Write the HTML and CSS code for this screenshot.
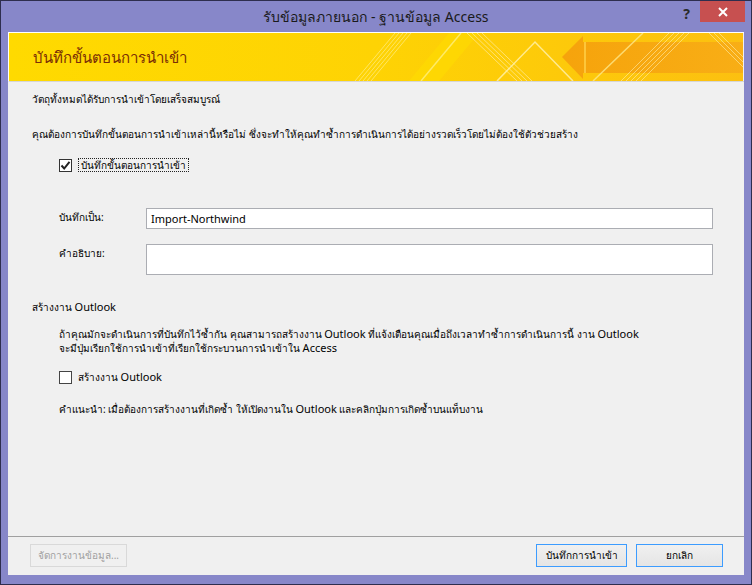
FILE: index.html
```html
<!DOCTYPE html>
<html lang="th">
<head>
  <meta charset="UTF-8" />
  <title>รับข้อมูลภายนอก - ฐานข้อมูล Access</title>
  <link rel="stylesheet" href="styles.css">
</head>
<body>
  <div class="window">
    <div class="titlebar">
      <span class="title">รับข้อมูลภายนอก - ฐานข้อมูล Access</span>
      <span class="help">?</span>
      <span class="close">
        <svg width="12" height="12" viewBox="0 0 12 12"><path d="M2 2 L10 10 M10 2 L2 10" stroke="#fff" stroke-width="2"/></svg>
      </span>
    </div>

    <div class="client">
      <div class="banner">
        <!-- decorative wizard header art -->
        <svg class="banner-art" width="734" height="48" viewBox="0 0 734 48" preserveAspectRatio="none">
          <defs>
            <linearGradient id="bg" x1="0" y1="0" x2="1" y2="0">
              <stop offset="0" stop-color="#ffda00"/>
              <stop offset="0.5" stop-color="#fed304"/>
              <stop offset="1" stop-color="#fcc010"/>
            </linearGradient>
            <linearGradient id="shaft" x1="0" y1="0" x2="1" y2="0">
              <stop offset="0" stop-color="#f59f0c"/>
              <stop offset="1" stop-color="#f8ac16"/>
            </linearGradient>
          </defs>
          <rect width="734" height="48" fill="url(#bg)"/>
          <polygon points="400,48 440,0 470,0 430,48" fill="#ffe000" opacity="0.45"/>
          <g stroke="#fff6b0" stroke-width="1" opacity="0.55">
            <line x1="346" y1="48" x2="386" y2="0"/>
            <line x1="350" y1="48" x2="390" y2="0"/>
            <line x1="354" y1="48" x2="394" y2="0"/>
            <line x1="358" y1="48" x2="398" y2="0"/>
            <line x1="362" y1="48" x2="402" y2="0"/>
          </g>
          <line x1="412" y1="48" x2="452" y2="0" stroke="#fff080" stroke-width="1.5" opacity="0.8"/>
          <g stroke="#fff2b8" stroke-width="1" opacity="0.6">
            <line x1="458" y1="0" x2="508" y2="48"/>
            <line x1="463" y1="0" x2="513" y2="48"/>
            <line x1="468" y1="0" x2="518" y2="48"/>
            <line x1="473" y1="0" x2="523" y2="48"/>
          </g>
          <polyline points="488,48 526,9 564,48" fill="none" stroke="#fff3b0" stroke-width="1.5" opacity="0.8"/>
          <polygon points="553,24 574,3 574,9 734,9 734,40 574,40 574,46" fill="url(#shaft)" opacity="0.9"/>
          <line x1="576" y1="9" x2="576" y2="40" stroke="#ffd24a" stroke-width="1.5"/>
          <line x1="584" y1="48" x2="634" y2="0" stroke="#ffe98a" stroke-width="1.5" opacity="0.8"/>
          <g stroke="#fff2b8" stroke-width="1" opacity="0.55">
            <line x1="612" y1="48" x2="660" y2="0"/>
            <line x1="617" y1="48" x2="665" y2="0"/>
            <line x1="622" y1="48" x2="670" y2="0"/>
            <line x1="627" y1="48" x2="675" y2="0"/>
            <line x1="632" y1="48" x2="680" y2="0"/>
          </g>
          <g stroke="#fff2b8" stroke-width="1" opacity="0.55">
            <line x1="700" y1="0" x2="734" y2="34"/>
            <line x1="705" y1="0" x2="734" y2="29"/>
            <line x1="710" y1="0" x2="734" y2="24"/>
          </g>
        </svg>
        <h1>บันทึกขั้นตอนการนำเข้า</h1>
      </div>

      <div class="body">
        <p class="line first">วัตถุทั้งหมดได้รับการนำเข้าโดยเสร็จสมบูรณ์</p>
        <p class="line">คุณต้องการบันทึกขั้นตอนการนำเข้าเหล่านี้หรือไม่ ซึ่งจะทำให้คุณทำซ้ำการดำเนินการได้อย่างรวดเร็วโดยไม่ต้องใช้ตัวช่วยสร้าง</p>

        <label class="check indent">
          <span class="box checked">
            <svg width="11" height="11" viewBox="0 0 11 11"><path d="M1.5 5.5 L4.2 8.5 L9.5 1.8" fill="none" stroke="#222" stroke-width="2"/></svg>
          </span>
          <span class="focus">บันทึกขั้นตอนการนำเข้า</span>
        </label>

        <div class="fields indent">
          <div class="field">
            <span class="field-label">บันทึกเป็น:</span>
            <div class="input en">Import-Northwind</div>
          </div>
          <div class="field">
            <span class="field-label">คำอธิบาย:</span>
            <div class="input tall"></div>
          </div>
        </div>

        <p class="line section">สร้างงาน <span class="en">Outlook</span></p>
        <p class="para indent">ถ้าคุณมักจะดำเนินการที่บันทึกไว้ซ้ำกัน คุณสามารถสร้างงาน <span class="en">Outlook</span> ที่แจ้งเตือนคุณเมื่อถึงเวลาทำซ้ำการดำเนินการนี้ งาน <span class="en">Outlook</span><br>จะมีปุ่มเรียกใช้การนำเข้าที่เรียกใช้กระบวนการนำเข้าใน <span class="en">Access</span></p>

        <label class="check indent outlook">
          <span class="box"></span>
          <span>สร้างงาน <span class="en">Outlook</span></span>
        </label>

        <p class="line indent tip">คำแนะนำ: เมื่อต้องการสร้างงานที่เกิดซ้ำ ให้เปิดงานใน <span class="en">Outlook</span> และคลิกปุ่มการเกิดซ้ำบนแท็บงาน</p>
      </div>

      <div class="footer">
        <button class="btn disabled" disabled>จัดการงานข้อมูล...</button>
        <div class="spacer"></div>
        <button class="btn primary save">บันทึกการนำเข้า</button>
        <button class="btn primary cancel">ยกเลิก</button>
      </div>
    </div>
  </div>
</body>
</html>
```

FILE: styles.css
```css
/* Base */
* { box-sizing: border-box; margin: 0; padding: 0; }
body { width: 752px; height: 585px; overflow: hidden; font-family: Tahoma, "Noto Sans", "DejaVu Sans", sans-serif; font-size: 10px; color: #000; background: #fff; }
.en { font-size: 11px; }

/* Window frame */
.window { width: 752px; height: 585px; border: 1px solid #2e2e4e; background: #8787c9; display: flex; flex-direction: column; padding: 0 7px 9px 7px; }

.titlebar { height: 31px; display: flex; align-items: center; justify-content: center; position: relative; }
.title { font-size: 14px; color: #1a1a1a; }
.help { position: absolute; right: 54px; top: 3px; font-size: 14px; font-weight: bold; color: #2a2a2a; }
.close { position: absolute; right: -1px; top: 0; width: 45px; height: 21px; background: #c75050; display: flex; align-items: center; justify-content: center; }

/* Client area */
.client { flex: 1; background: #f0f0f0; display: flex; flex-direction: column; }

.banner { height: 50px; position: relative; border-top: 1px solid #fff; border-left: 1px solid #fff; border-bottom: 1px solid #d6d6d6; overflow: hidden; display: flex; align-items: center; }
.banner-art { position: absolute; left: 0; top: 0; }
.banner h1 { position: relative; font-size: 15px; font-weight: normal; color: #7a2e06; padding-left: 24px; margin-top: 1px; }

.body { flex: 1; padding: 10px 0 0 24px; }
.line { line-height: 14px; }
.body .line + .line { margin-top: 21px; }
.indent { margin-left: 27px; }

.check { display: flex; align-items: center; gap: 6px; height: 14px; }
.body > .check { margin-top: 17px; }
.box { width: 13px; height: 13px; border: 1px solid #333; background: #fff; display: flex; align-items: center; justify-content: center; }
.focus { border: 1px dotted #222; padding: 0 2px; line-height: 12px; }

.fields { margin-top: 36px; margin-right: 31px; display: flex; flex-direction: column; gap: 15px; }
.field { display: flex; align-items: flex-start; }
.field-label { width: 87px; padding-top: 2px; }
.input { flex: 1; height: 21px; border: 1px solid #abadb3; background: #fff; padding: 2px 4px; line-height: 15px; }
.input.tall { height: 31px; }

.body .section { margin-top: 25px; }
.para { margin-top: 13px; line-height: 14px; }
.body > .outlook { margin-top: 15px; }
.outlook .box { border-color: #444; }
.body .tip { margin-top: 18px; }

/* Footer buttons */
.footer { height: 39px; border-top: 1px solid #a0a0a0; display: flex; align-items: flex-start; padding: 7px 21px 0 22px; gap: 9px; }
.spacer { flex: 1; }
.btn { height: 23px; font-family: inherit; font-size: 10px; background: linear-gradient(#f0f0f0, #e5e5e5); border: 1px solid #adadad; color: #000; }
.btn.disabled { width: 97px; background: #f0f0f0; border-color: #d9d9d9; color: #a0a0a0; }
.btn.primary { border-color: #3c9cff; }
.save { width: 91px; }
.cancel { width: 87px; }
```
